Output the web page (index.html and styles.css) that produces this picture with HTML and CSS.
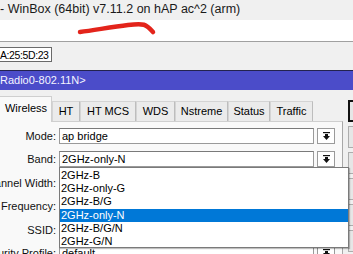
FILE: index.html
```html
<!DOCTYPE html>
<html>

<head>
    <title>WinBox</title>
    <link rel="stylesheet" href="styles.css">
</head>

<body>
    <div class="title">- WinBox (64bit) v7.11.2 on hAP ac^2 (arm)</div>
    <div class="blank"></div>
    <div class="toolbar">
        <div class="field mac">A:25:5D:23</div>
    </div>
    <div class="winbar">Radio0-802.11N&gt;</div>
    <div class="dialog">
        <div class="main">
            <div class="tabs">
                <div class="tab active">Wireless</div>
                <div class="tab t-ht">HT</div>
                <div class="tab t-mcs">HT MCS</div>
                <div class="tab t-wds">WDS</div>
                <div class="tab t-nstreme">Nstreme</div>
                <div class="tab t-status">Status</div>
                <div class="tab t-traffic">Traffic</div>
            </div>
            <div class="panel">
                <div class="row">
                    <div class="label">Mode:</div>
                    <div class="field">ap bridge</div>
                    <div class="drop"><svg width="7" height="8" viewBox="0 0 7 8"><rect x="0" y="0" width="7" height="1.2"/><rect x="2" y="2" width="3" height="2"/><polygon points="0,4 7,4 3.5,8"/></svg></div>
                </div>
                <div class="row">
                    <div class="label">Band:</div>
                    <div class="field">2GHz-only-N</div>
                    <div class="drop"><svg width="7" height="8" viewBox="0 0 7 8"><rect x="0" y="0" width="7" height="1.2"/><rect x="2" y="2" width="3" height="2"/><polygon points="0,4 7,4 3.5,8"/></svg></div>
                </div>
                <div class="row">
                    <div class="label">Channel Width:</div>
                    <div class="field"></div>
                    <div class="drop"></div>
                </div>
                <div class="row">
                    <div class="label">Frequency:</div>
                    <div class="field"></div>
                    <div class="drop"></div>
                </div>
                <div class="row">
                    <div class="label">SSID:</div>
                    <div class="field"></div>
                    <div class="drop"></div>
                </div>
                <div class="row">
                    <div class="label">Security Profile:</div>
                    <div class="field">default</div>
                    <div class="drop"><svg width="7" height="8" viewBox="0 0 7 8"><rect x="0" y="0" width="7" height="1.2"/><rect x="2" y="2" width="3" height="2"/><polygon points="0,4 7,4 3.5,8"/></svg></div>
                </div>
            </div>
        </div>
        <div class="buttons">
            <div class="btn default"></div>
            <div class="btn"></div>
            <div class="btn"></div>
            <div class="btn"></div>
            <div class="btn"></div>
            <div class="btn"></div>
        </div>
    </div>

    <div class="list">
        <div class="item">2GHz-B</div>
        <div class="item">2GHz-only-G</div>
        <div class="item">2GHz-B/G</div>
        <div class="item selected">2GHz-only-N</div>
        <div class="item">2GHz-B/G/N</div>
        <div class="item">2GHz-G/N</div>
    </div>

    <svg class="scribble" width="170" height="45" viewBox="0 0 170 45">
        <path d="M80 32 C 95 30, 112 27, 128 25 S 146 24, 153 32" />
    </svg>
</body>

</html>
```

FILE: styles.css
```css
* {
    box-sizing: border-box;
}

body {
    margin: 0;
    padding: 0;
    width: 353px;
    height: 254px;
    overflow: hidden;
    position: relative;
    font-family: "Liberation Sans", Arial, sans-serif;
    font-size: 11px;
    color: #000;
    background-color: #f0f0f0;
}

.title {
    height: 20px;
    line-height: 19px;
    font-size: 12.5px;
    white-space: nowrap;
    background-color: #f0f0f0;
    color: #1a1a1a;
}

.blank {
    height: 22px;
    background-color: #fff;
    border-bottom: 1px solid #a0a0a0;
}

.toolbar {
    height: 28px;
    padding-top: 5px;
    background-color: #f0f0f0;
}

.field {
    flex: 1;
    height: 16px;
    line-height: 14px;
    padding-left: 2px;
    white-space: nowrap;
    overflow: hidden;
    background-color: #fff;
    border: 1px solid #9a9a9a;
    border-top-color: #7a7a7a;
}

.mac {
    width: 55px;
    height: 15px;
    margin-left: -3px;
    padding-left: 2px;
    font-size: 10.5px;
    letter-spacing: -0.4px;
    overflow: visible;
    border-color: #6a6a6a;
}

.winbar {
    height: 20px;
    line-height: 18px;
    color: #f4f4ff;
    background-color: #4b4cc9;
    border-top: 1px solid #23234f;
    white-space: nowrap;
}

.dialog {
    display: flex;
    padding-top: 6px;
    background-color: #f0f0f0;
}

.main {
    width: 343px;
    flex-shrink: 0;
}

.tabs {
    display: flex;
    align-items: flex-end;
    height: 25px;
    position: relative;
    z-index: 1;
}

.tab {
    height: 20px;
    line-height: 19px;
    text-align: center;
    white-space: nowrap;
    background-color: #ebebeb;
    border: 1px solid #d4d4d4;
    border-bottom: none;
    border-right-color: #bdbdbd;
}

.tab.active {
    width: 52px;
    height: 26px;
    line-height: 22px;
    margin-bottom: -1px;
    padding-left: 1px;
    background-color: #f9f9f9;
    border-color: #cfcfcf;
    border-left: none;
}

.t-ht { width: 28px; }
.t-mcs { width: 56px; }
.t-wds { width: 39px; }
.t-nstreme { width: 53px; }
.t-status { width: 42px; }
.t-traffic { width: 43px; }

.panel {
    height: 140px;
    padding-top: 6px;
    background-color: #f9f9f9;
    border-top: 1px solid #cfcfcf;
    border-right: 1px solid #a8a8a8;
}

.row {
    display: flex;
    align-items: center;
    height: 16px;
    margin-bottom: 7.4px;
}

.label {
    width: 56px;
    flex-shrink: 0;
    display: flex;
    justify-content: flex-end;
    white-space: nowrap;
    margin-right: 3px;
    color: #111;
}

.drop {
    width: 18px;
    height: 16px;
    margin-left: 3px;
    margin-right: 7px;
    display: flex;
    align-items: center;
    justify-content: center;
    background-color: #fff;
    border: 1px solid #9a9a9a;
}

.drop svg {
    fill: #111;
}

.buttons {
    display: flex;
    flex-direction: column;
    gap: 4px;
    margin-left: 5px;
    padding-top: 4px;
}

.btn {
    width: 70px;
    height: 22px;
    flex-shrink: 0;
    background-color: #e6e6e6;
    border: 1px solid #adadad;
}

.btn.default {
    border: 2px solid #111;
}

.list {
    position: absolute;
    left: 59px;
    top: 167px;
    width: 290px;
    height: 81px;
    padding-top: 1px;
    background-color: #fff;
    border: 1px solid #7a7a7a;
    box-shadow: 1px 1px 1px rgba(0, 0, 0, 0.25);
}

.item {
    height: 13.2px;
    line-height: 13px;
    padding-left: 1px;
    white-space: nowrap;
}

.item.selected {
    color: #fff;
    background-color: #0078d7;
}

.scribble {
    position: absolute;
    left: 0;
    top: 0;
}

.scribble path {
    fill: none;
    stroke: #e3241b;
    stroke-width: 4.5;
    stroke-linecap: round;
}
```
